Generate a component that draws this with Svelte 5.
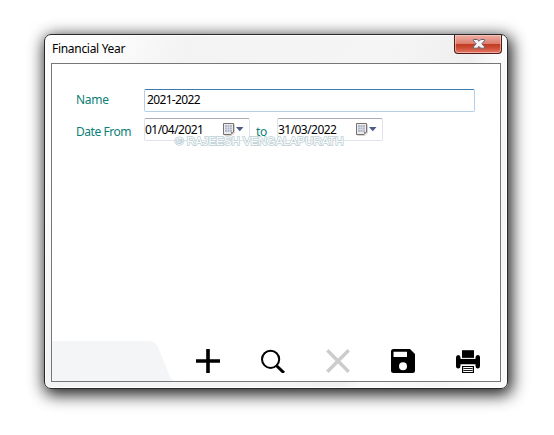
<script>
  const dates = ['01/04/2021', '31/03/2022'];
</script>

{#snippet dateField(value)}
  <div class="date">
    <span class="value">{value}</span>
    <svg class="cal" width="21" height="13" viewBox="0 0 21 13">
      <path d="M1.500 12.400h7.500l2.500-2.500v-8.500" fill="none" stroke="#d5cfcd" />
      <path d="M.5 .5h10v8.500l-2.500 2.500h-7.500z" fill="#ececef" stroke="#77716f" />
      <path d="M2 2h7v7h-7z" fill="#b4bccb" />
      <path d="M2 4.500h7M2 6.500h7M4.500 2v7M6.500 2v7" stroke="#e9edf3" stroke-width=".4" />
      <path d="M8 11.500v-2.500h2.500z" fill="#8b8583" />
      <path d="M13 4h7.500l-3.750 4.200z" fill="#4a5b88" />
    </svg>
  </div>
{/snippet}

<main>
  <section class="window">
    <header>
      <h1>Financial Year</h1>
      <button class="close" aria-label="Close">
        <svg width="14" height="12" viewBox="0 0 14 12">
          <path d="M1.500 1.500h3.700l1.800 1.800 1.800-1.800h3.700v1.300l-2.700 3 2.700 3v1.400h-3.700l-1.800-1.800-1.800 1.800h-3.700v-1.400l2.700-3-2.700-3z" fill="#f5f5f5" stroke="#62657a" stroke-width="1" stroke-linejoin="round" />
        </svg>
      </button>
    </header>
    <div class="client">
      <div class="row first">
        <span class="label name">Name</span>
        <div class="input"><span class="value">2021-2022</span></div>
      </div>
      <div class="row second">
        <span class="label from">Date From</span>
        {@render dateField(dates[0])}
        <span class="label to">to</span>
        {@render dateField(dates[1])}
        <span class="mark">© RAJEESH VENGALAPURATH</span>
      </div>
      <footer>
        <svg class="tab" width="122" height="40" viewBox="0 0 122 40">
          <path d="M0 0H96C101 0 104 2 106 6L117 33C118.500 37 120 39 122 40H0z" fill="#f4f5f7" />
        </svg>
        <div class="tools">
          <svg viewBox="0 0 24 24"><path d="M0 12h24M12 0v24" stroke="#000" stroke-width="3.600" /></svg>
          <svg viewBox="0 0 24 24"><circle cx="9.600" cy="10.300" r="8.600" fill="none" stroke="#000" stroke-width="2" /><path d="M15.300 16.500l7.700 7.400" stroke="#000" stroke-width="3" /></svg>
          <svg viewBox="0 0 24 24"><path d="M1.300 1.300l21.400 21.400M22.700 1.300L1.300 22.700" stroke="#ccc" stroke-width="3.400" /></svg>
          <svg viewBox="0 0 24 24"><path fill-rule="evenodd" d="M2.500 0H19l5 5v16.500q0 2.500-2.500 2.500h-19q-2.500 0-2.500-2.500v-19q0-2.500 2.500-2.500zM2.500 2.700v5.300h13.500v-5.300zM12 13.300a4 4 0 1 0 0 8a4 4 0 1 0 0-8z" /></svg>
          <svg viewBox="0 0 24 24">
            <path d="M6 1.200h12v8h-12z" />
            <path d="M5.200 9.300h13.600" stroke="#fff" stroke-width=".7" />
            <path d="M0 8.500q0-2.500 2.200-2.500t2.300 2.500v1.500h15v-1.500q0-2.500 2.300-2.500t2.200 2.500v8.500q0 2.500-2.200 2.500t-2.300-2.500v-1.800h-15v1.800q0 2.500-2.300 2.500t-2.200-2.500z" />
            <path d="M5.500 16.200h13v8h-13z" fill="#fff" />
            <path d="M6.600 17.500h10.800v6h-10.800z" fill="#fff" stroke="#000" stroke-width="1.200" />
            <path d="M7.500 19.500h9M7.500 21.500h9" stroke="#000" stroke-width=".9" />
          </svg>
        </div>
      </footer>
    </div>
  </section>
</main>

<style>
  :global(body) { background: #fff; }
  main {
    box-sizing: border-box;
    width: 554px;
    height: 435px;
    padding: 34px 46px 46px 44px;
    font: 12px "Noto Sans", "Open Sans", sans-serif;
    color: #000;
    overflow: hidden;
  }
  .window {
    box-sizing: border-box;
    width: 464px;
    height: 355px;
    padding: 0 6px 6px;
    border: 1px solid #29292d;
    border-radius: 7px;
    background: linear-gradient(112deg, #fdfdfd 0 10%, #f3f3f4 24%, #f5f5f6 58%, #efefef 72%, #fafafa 76%, #f6f6f7 88%, #fcfcfc);
    box-shadow: inset 0 0 0 1px #fff, 2px 4px 16px 2px rgba(0, 0, 0, .88);
  }
  header { display: flex; justify-content: space-between; align-items: flex-start; height: 28px; }
  h1 { margin: 5px 0 0 1px; font-size: 12px; line-height: 17px; font-weight: 400; letter-spacing: -.3px; white-space: nowrap; }
  .close {
    box-sizing: border-box;
    display: flex;
    align-items: center;
    justify-content: center;
    width: 48px;
    height: 19px;
    padding: 0 0 0 1px;
    margin-right: -1px;
    border: 1px solid #4c1d1c;
    border-top: 0;
    border-radius: 0 0 4px 4px;
    background: linear-gradient(#efb0a5, #dd7c6c 48%, #c03a21 50%, #cb4a30 70%, #e4796a);
    box-shadow: inset 0 0 0 1px rgba(255, 205, 195, .6);
  }
  .client {
    box-sizing: border-box;
    display: flex;
    flex-direction: column;
    width: 450px;
    height: 319px;
    border: 1px solid #77777b;
    background: #fff;
  }
  .row { display: flex; align-items: flex-start; padding-left: 24px; }
  .first { padding-top: 25px; }
  .second { position: relative; padding-top: 6px; }
  .label { color: #0a8076; line-height: 17px; letter-spacing: -.25px; white-space: nowrap; }
  .name { width: 68px; margin-top: 2px; }
  .from { width: 68px; margin-top: 5px; letter-spacing: -.45px; }
  .to { width: 21px; margin: 5px 0 0 6px; }
  .input, .date {
    box-sizing: border-box;
    display: flex;
    height: 23px;
    border: 1px solid #b5cfe7;
    border-top-color: #3d7bad;
    border-radius: 2px;
    background: #fff;
  }
  .input { width: 331px; padding-left: 2px; }
  .date { width: 106px; padding: 0 5px 0 0; justify-content: space-between; border-color: #e2e3ea; border-top-color: #abadb3; }
  .value { line-height: 19px; letter-spacing: -.65px; white-space: nowrap; }
  .date .value { line-height: 21px; letter-spacing: -.55px; }
  .cal { margin-top: 4px; }
  .mark {
    position: absolute;
    left: 123px;
    top: 22px;
    font: 11.5px/14px "Liberation Sans", Arial, sans-serif;
    color: #fff;
    -webkit-text-stroke: 1.6px #bccfd5;
    paint-order: stroke fill;
    white-space: nowrap;
  }
  footer { display: flex; align-items: flex-end; margin-top: auto; height: 40px; }
  .tab { flex: none; }
  .tools { display: flex; gap: 41px; margin: 0 0 8px 22px; }
  .tools svg { display: block; width: 24px; height: 24px; }
</style>
